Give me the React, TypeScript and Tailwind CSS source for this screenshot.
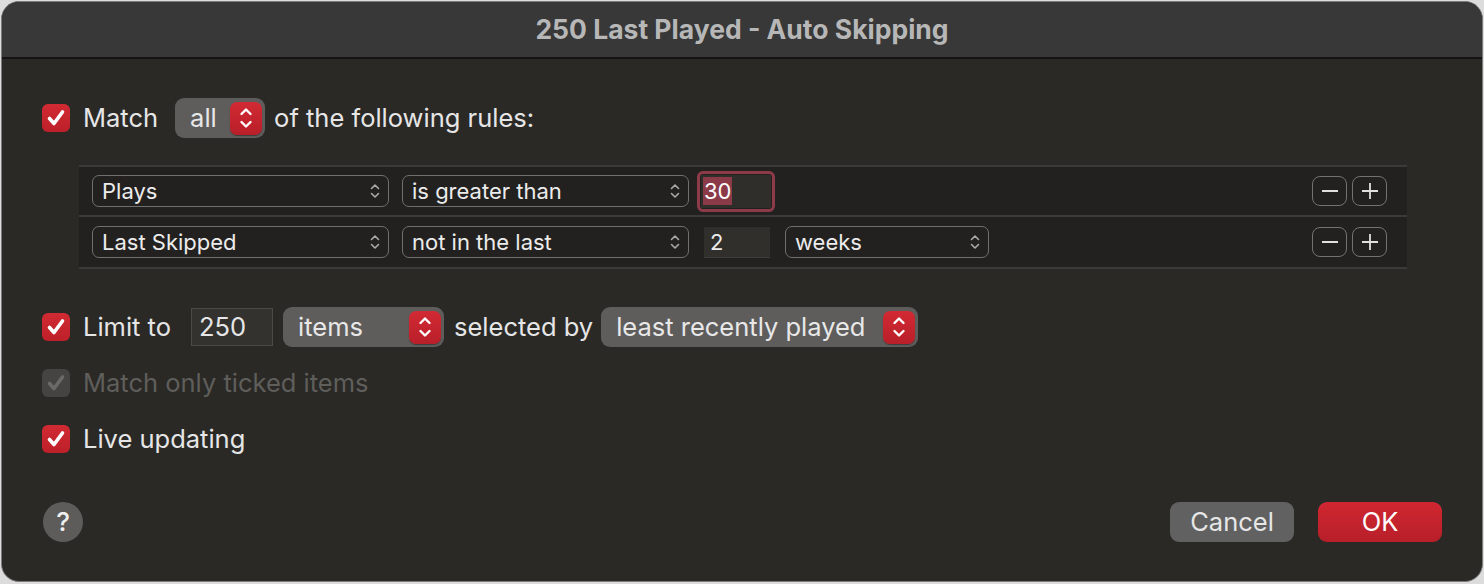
import React from 'react';

const font = { fontFamily: 'Inter, "Liberation Sans", sans-serif' };

function Check({ disabled = false }: { disabled?: boolean }) {
  return (
    <div
      className={`w-[28px] h-[28px] rounded-[6px] flex items-center justify-center shrink-0 ${
        disabled ? 'bg-[#454442]' : 'bg-gradient-to-b from-[#d12a33] to-[#bd2029]'
      }`}
    >
      <svg width="22" height="22" viewBox="0 0 22 22" fill="none">
        <path
          d="M4.5 11.5 L9 16.5 L17.5 5"
          stroke={disabled ? '#6b6a68' : '#ffffff'}
          strokeWidth="3.6"
          strokeLinecap="round"
          strokeLinejoin="round"
        />
      </svg>
    </div>
  );
}

function RedStepper() {
  return (
    <div className="w-[32px] h-[33px] rounded-[7px] bg-gradient-to-b from-[#d22a34] to-[#b91f29] flex items-center justify-center shrink-0 shadow-[0_1px_1px_rgba(0,0,0,0.35)]">
      <svg width="16" height="24" viewBox="0 0 16 24" fill="none">
        <path d="M3.5 8 L8 3.5 L12.5 8" stroke="#fff" strokeWidth="2.4" strokeLinecap="round" strokeLinejoin="round" />
        <path d="M3.5 16 L8 20.5 L12.5 16" stroke="#fff" strokeWidth="2.4" strokeLinecap="round" strokeLinejoin="round" />
      </svg>
    </div>
  );
}

function FilledPopup({ label, width }: { label: string; width: string }) {
  return (
    <div className={`${width} h-[40px] rounded-[9px] bg-[#5e5d5c] flex items-center justify-between pr-[3px] pl-[15px] shrink-0`}>
      <span className="text-[25.5px] text-[#e8e8e8] leading-none">{label}</span>
      <RedStepper />
    </div>
  );
}

function SmallChevrons() {
  return (
    <svg width="10" height="18" viewBox="0 0 10 18" fill="none">
      <path d="M1.5 6.5 L5 3 L8.5 6.5" stroke="#a9a9a9" strokeWidth="1.6" strokeLinecap="round" strokeLinejoin="round" />
      <path d="M1.5 11.5 L5 15 L8.5 11.5" stroke="#a9a9a9" strokeWidth="1.6" strokeLinecap="round" strokeLinejoin="round" />
    </svg>
  );
}

function Popup({ label, width, className = '' }: { label: string; width: string; className?: string }) {
  return (
    <div
      className={`${width} h-[32px] rounded-[7px] border-[1.5px] border-[#707070] flex items-center justify-between pl-[9px] pr-[8px] shrink-0 ${className}`}
    >
      <span className="text-[22px] text-[#ececec] leading-none">{label}</span>
      <SmallChevrons />
    </div>
  );
}

function PlusMinus() {
  return (
    <div className="flex gap-[5px] ml-auto">
      <div className="w-[35px] h-[30px] rounded-[8px] border-[1.5px] border-[#727272] flex items-center justify-center">
        <svg width="18" height="18" viewBox="0 0 18 18">
          <path d="M1 9 H17" stroke="#e0e0e0" strokeWidth="1.8" />
        </svg>
      </div>
      <div className="w-[35px] h-[30px] rounded-[8px] border-[1.5px] border-[#727272] flex items-center justify-center">
        <svg width="18" height="18" viewBox="0 0 18 18">
          <path d="M1 9 H17 M9 1 V17" stroke="#e0e0e0" strokeWidth="1.8" />
        </svg>
      </div>
    </div>
  );
}

export default function App() {
  return (
    <div className="w-[1484px] h-[584px] bg-[#dcdcdc] pt-[1px] pl-[1px]" style={font}>
      <div className="w-[1482px] h-[581px] rounded-[18px] border border-[#7c7c7c] overflow-hidden flex flex-col bg-[#2a2926]">
        {/* title bar */}
        <div className="h-[57px] bg-[#383838] border-b-2 border-[#141414] flex items-center justify-center shrink-0">
          <span className="text-[26.5px] font-bold text-[#b7b7b7]">250 Last Played - Auto Skipping</span>
        </div>

        <div className="flex-1 flex flex-col px-[40px]">
          {/* match row */}
          <div className="flex items-center h-[40px] mt-[39px]">
            <Check />
            <span className="ml-[13px] text-[25.5px] text-[#e6e6e6]">Match</span>
            <div className="ml-[17px]">
              <FilledPopup label="all" width="w-[90px]" />
            </div>
            <span className="ml-[9px] text-[25.5px] text-[#e6e6e6]">of the following rules:</span>
          </div>

          {/* rules */}
          <div className="ml-[37px] w-[1328px] mt-[27px] bg-[#222120] border-t-2 border-b-2 border-[#3b3a39]">
            <div className="h-[50px] flex items-center pl-[13px] pr-[20px] border-b-2 border-[#3b3a39]">
              <Popup label="Plays" width="w-[297px]" />
              <Popup label="is greater than" width="w-[287px]" className="ml-[13px]" />
              <div className="ml-[8px] w-[78px] h-[41px] rounded-[6px] border-[3px] border-[#8d3a49] p-[1px]">
                <div className="w-full h-full bg-[#2f2e2b] flex items-center pl-[2px]">
                  <span className="bg-[#8b3a48] text-[22px] text-white leading-[28px] px-[1px]">30</span>
                </div>
              </div>
              <PlusMinus />
            </div>
            <div className="h-[50px] flex items-center pl-[13px] pr-[20px]">
              <Popup label="Last Skipped" width="w-[297px]" />
              <Popup label="not in the last" width="w-[287px]" className="ml-[13px]" />
              <div className="ml-[15px] w-[66px] h-[32px] bg-[#302f2c] border-t border-[#1f1e1c] border-b border-b-[#3e3d3a] flex items-center pl-[6px]">
                <span className="text-[22px] text-[#ececec] leading-none">2</span>
              </div>
              <Popup label="weeks" width="w-[204px]" className="ml-[15px]" />
              <PlusMinus />
            </div>
          </div>

          {/* limit row */}
          <div className="flex items-center h-[40px] mt-[38px]">
            <Check />
            <span className="ml-[13px] text-[25.5px] text-[#e6e6e6]">Limit to</span>
            <div className="ml-[20px] w-[82px] h-[38px] bg-[#33322f] border border-[#4b4a47] flex items-center pl-[7px]">
              <span className="text-[25.5px] text-[#e6e6e6] leading-none">250</span>
            </div>
            <div className="ml-[10px]">
              <FilledPopup label="items" width="w-[161px]" />
            </div>
            <span className="ml-[10px] text-[25.5px] text-[#e6e6e6]">selected by</span>
            <div className="ml-[8px]">
              <FilledPopup label="least recently played" width="w-[317px]" />
            </div>
          </div>

          {/* match only ticked */}
          <div className="flex items-center h-[40px] mt-[16px]">
            <Check disabled />
            <span className="ml-[13px] text-[25.5px] text-[#5f5e5b]">Match only ticked items</span>
          </div>

          {/* live updating */}
          <div className="flex items-center h-[40px] mt-[16px]">
            <Check />
            <span className="ml-[13px] text-[25.5px] text-[#e6e6e6]">Live updating</span>
          </div>

          {/* buttons */}
          <div className="flex items-center h-[40px] mt-[43px]">
            <div className="w-[40px] h-[40px] rounded-full bg-[#5d5c5b] flex items-center justify-center ml-[1px]">
              <span className="text-[26px] font-medium text-[#efefef] leading-none">?</span>
            </div>
            <div className="ml-auto w-[124px] h-[40px] rounded-[9px] bg-[#616161] flex items-center justify-center">
              <span className="text-[25.5px] text-[#e6e6e6]">Cancel</span>
            </div>
            <div className="ml-[24px] w-[124px] h-[40px] rounded-[9px] bg-gradient-to-b from-[#cf2731] to-[#b81f29] flex items-center justify-center">
              <span className="text-[25.5px] text-white">OK</span>
            </div>
          </div>
        </div>
      </div>
    </div>
  );
}
